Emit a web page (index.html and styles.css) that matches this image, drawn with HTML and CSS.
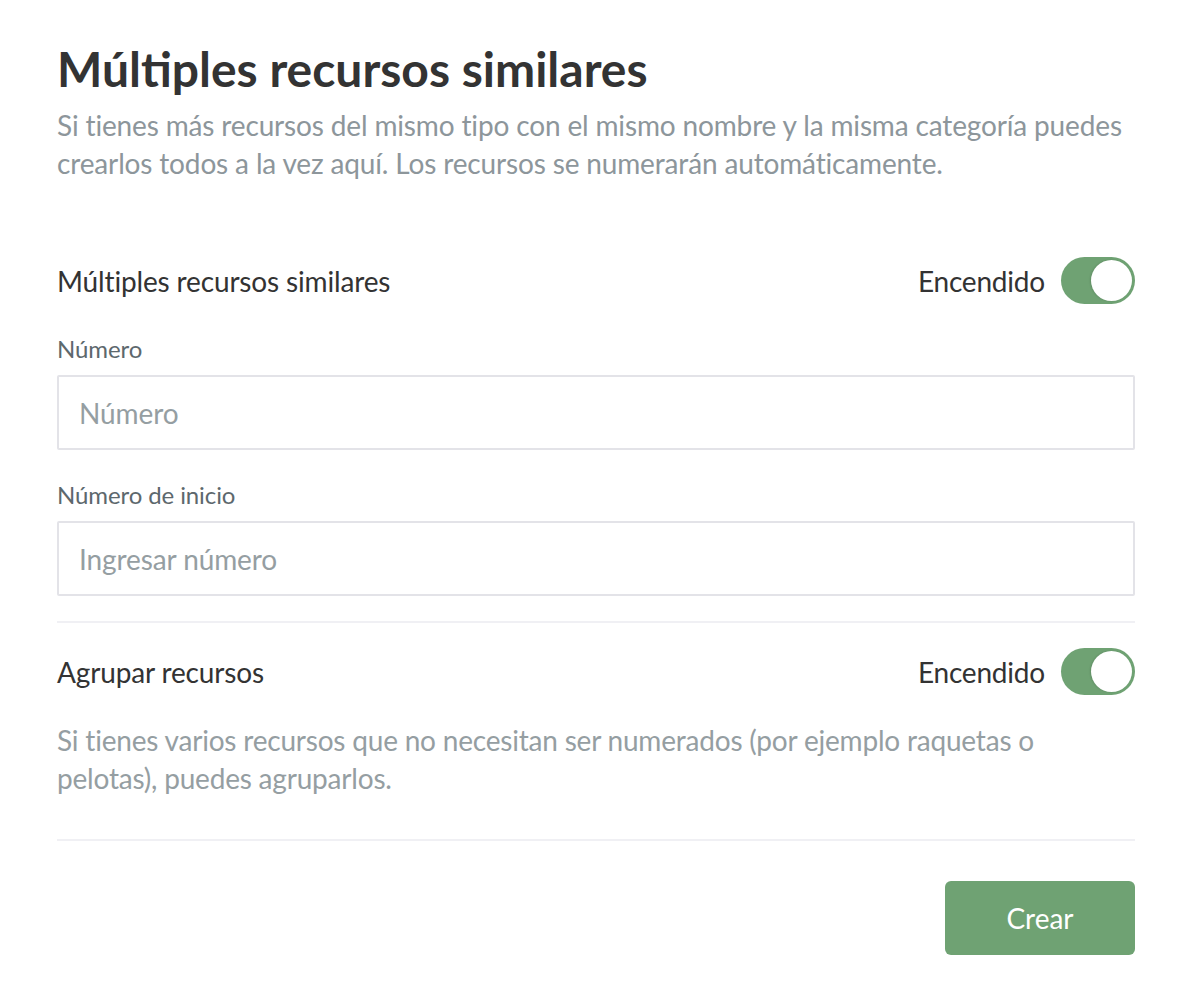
FILE: index.html
```html
<!DOCTYPE html>
<html lang="es">
<head>
<meta charset="utf-8">
<link rel="stylesheet" href="styles.css">
</head>
<body>
<div class="page">
  <h1 class="title">Múltiples recursos similares</h1>
  <p class="intro">Si tienes más recursos del mismo tipo con el mismo nombre y la misma categoría puedes crearlos todos a la vez aquí. Los recursos se numerarán automáticamente.</p>

  <div class="row row-first">
    <span class="row-label">Múltiples recursos similares</span>
    <div class="switch-wrap">
      <span class="switch-text">Encendido</span>
      <span class="switch"><span class="knob"></span></span>
    </div>
  </div>

  <div class="field">
    <label class="field-label">Número</label>
    <div class="input"><span class="placeholder">Número</span></div>
  </div>
  <div class="field">
    <label class="field-label">Número de inicio</label>
    <div class="input"><span class="placeholder">Ingresar número</span></div>
  </div>

  <hr class="divider">

  <div class="row">
    <span class="row-label">Agrupar recursos</span>
    <div class="switch-wrap">
      <span class="switch-text">Encendido</span>
      <span class="switch"><span class="knob"></span></span>
    </div>
  </div>
  <p class="help">Si tienes varios recursos que no necesitan ser numerados (por ejemplo raquetas o pelotas), puedes agruparlos.</p>

  <hr class="divider divider-bottom">

  <div class="actions">
    <button class="btn">Crear</button>
  </div>
</div>
</body>
</html>
```
FILE: styles.css
```css
* { box-sizing: border-box; }
html, body { margin: 0; padding: 0; background: #fff; }
body { font-family: "Lato", "Open Sans", sans-serif; color: #333; }
.page { width: 1078px; margin-left: 57px; padding-top: 40px; }
.title { font-size: 48px; font-weight: 700; margin: 0; line-height: 58px; color: #333; }
.intro { font-size: 28px; line-height: 38px; color: #8d969b; margin: 8px 0 0; letter-spacing: -0.15px; }
.row { display: flex; justify-content: space-between; align-items: center; height: 47px; }
.row-first { margin-top: 75px; }
.row-label { font-size: 28px; color: #333; letter-spacing: -0.15px; }
.switch-wrap { display: flex; align-items: center; gap: 16px; }
.switch-text { font-size: 28px; color: #333; letter-spacing: -0.2px; }
.switch { width: 74px; height: 47px; border-radius: 24px; background: #6fa273; position: relative; display: block; }
.knob { position: absolute; right: 3px; top: 3px; width: 41px; height: 41px; border-radius: 50%; background: #fff; box-shadow: -1px 0 2px rgba(0,0,0,0.12); }
.field { margin-top: 31px; }
.field-label { display: block; font-size: 24px; color: #5d686d; line-height: 28px; margin-bottom: 12px; letter-spacing: -0.1px; }
.input { height: 75px; border: 2px solid #e3e3e8; border-radius: 2px; display: flex; align-items: center; padding-left: 20px; }
.placeholder { font-size: 28px; color: #959ea2; letter-spacing: -0.1px; }
.divider { border: 0; border-top: 2px solid #f0f0f4; margin: 25px 0 0; }
.divider + .row { margin-top: 25px; }
.help { font-size: 28px; line-height: 38px; color: #959ea2; margin: 26px 0 0; letter-spacing: -0.2px; }
.divider-bottom { margin-top: 42px; }
.actions { display: flex; justify-content: flex-end; margin-top: 40px; }
.btn { width: 190px; height: 74px; border: 0; border-radius: 6px; background: #6fa273; color: #fff; font-family: "Lato", sans-serif; font-size: 28px; }
```
